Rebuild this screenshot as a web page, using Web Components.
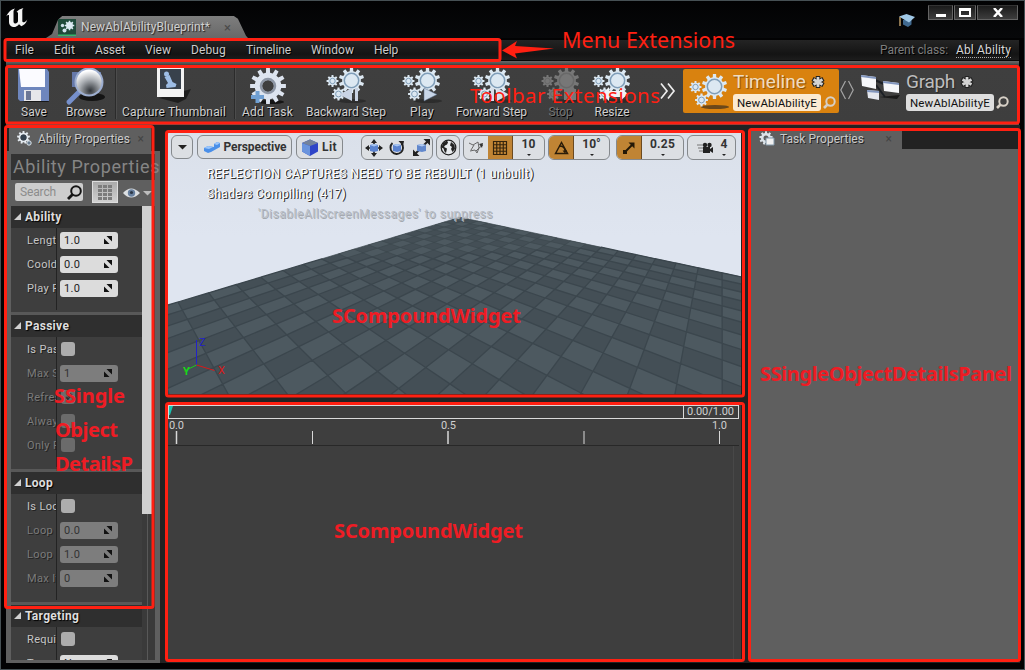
<!DOCTYPE html>
<html lang="en">
<head>
<meta charset="utf-8">
<title>NewAblAbilityBlueprint</title>
<style>
html,body{margin:0;width:1025px;height:670px;overflow:hidden;background:#000;font-family:Roboto,"Liberation Sans",sans-serif}
</style>
</head>
<body>
<ability-editor></ability-editor>
<script>
const define=(name,html,ready)=>customElements.define(name,class extends HTMLElement{
  connectedCallback(){
    if(this.shadowRoot)return;
    this.attachShadow({mode:'open'}).innerHTML=typeof html==='function'?html(this):html;
    if(ready)ready(this,this.shadowRoot);
  }
});
const at=(e,n,d='')=>e.hasAttribute(n)?e.getAttribute(n):d;

/* Text whose tracking adjusts so that it fills the given width. */
define('fit-text',`<style>:host{display:inline-block;white-space:pre;flex:none}span{display:inline-block}</style><span><slot></slot></span>`,(e,r)=>{
  const w=+at(e,'w');if(!w)return;
  const s=r.querySelector('span'),n=e.textContent.length;
  e.style.width=w+'px';
  s.style.letterSpacing=((w-s.getBoundingClientRect().width)/n)+'px';
});

function gear(cx,cy,r,n,hole){
  let d='';const st=Math.PI*2/n;
  for(let i=0;i<n;i++){const a=i*st-Math.PI/2;
    [[-.3,.74],[-.2,1],[.2,1],[.3,.74]].forEach(([o,k],j)=>{
      d+=(i||j?'L':'M')+(cx+Math.cos(a+o*st)*r*k).toFixed(2)+' '+(cy+Math.sin(a+o*st)*r*k).toFixed(2);});}
  d+='Z';
  if(hole)d+=`M${cx-hole} ${cy}a${hole} ${hole} 0 1 0 ${hole*2} 0a${hole} ${hole} 0 1 0 ${-hole*2} 0Z`;
  return d;
}
const gears=(extra='',fill='#dce8f2',ring='#7f9db8')=>`
 <ellipse cx="25" cy="33" rx="14" ry="2" fill="#222" opacity=".6"/>
 <path d="${gear(24.5,12.5,12.7,10)}" fill="${fill}"/><circle cx="24.5" cy="12.5" r="7.200" fill="${fill}" stroke="${ring}" stroke-width="1.5"/>
 <path d="${gear(5.5,13,6,8)}" fill="${fill}"/><circle cx="5.5" cy="13" r="2.7" fill="${fill}" stroke="${ring}"/>
 <path d="${gear(11.5,26,6.5,8)}" fill="${fill}"/><circle cx="11.5" cy="26" r="2.9" fill="${fill}" stroke="${ring}"/>${extra}`;
const svg=(w,h,body)=>`<svg width="${w}" height="${h}" viewBox="0 0 ${w} ${h}">${body}</svg>`;
const ICONS={
 logo:svg(24,20,`<path d="M0 9C2 4 5 1.500 9 .5c-1 1-1.500 2-1.500 3v10c0 1.500 1 2 2 2s2.500-1 2.500-2.500V5.500c0-1-.5-1.500-1.500-1.500C12 2 14.500.8 17.500 0c-1 1-1.200 2-1.200 3.200V13c0 1 1 1.700 2 1.200s2-1.200 3-3c-1 4-3.500 6-6 7l-2.300-2c-1.500 2-3.500 3-6 2.800C4 18.500 3 16 3 14V7.500C3 6.500 1 7 0 9Z" fill="#f4f4f4"/>`),
 tab:svg(18,17,`<rect width="18" height="17" fill="#1f4a3a"/><rect y="15.500" width="18" height="1.500" fill="#38b46c"/><path d="${gear(11.500,6.500,4.800,8)}" fill="#dceaf2"/><circle cx="4.500" cy="6.500" r="1.700" fill="#cfe0ea"/><circle cx="6.500" cy="11.500" r="2" fill="#cfe0ea"/>`),
 save:svg(34,36,`<path d="M5 34h27l-3-5z" fill="#181818"/><path d="M1 1h29l2 3v29H3l-2-2z" fill="#6e86bd"/><path d="M2 1h26v18H4z" fill="#fbfbff"/><path d="M7 22h17v11H7z" fill="#e6e6ea"/><path d="M9 23h5v9H9z" fill="#6d7896"/>`),
 browse:svg(42,36,`<defs><radialGradient id="g" cx=".55" cy=".85" r=".8"><stop offset="0" stop-color="#2f3338"/><stop offset=".55" stop-color="#a9adb2"/><stop offset="1" stop-color="#fff"/></radialGradient></defs><ellipse cx="27" cy="29" rx="13" ry="4" fill="#141414"/><path d="M7 4h29v15H7z" fill="#6679aa"/><path d="M4 34l12-12" stroke="#7690cc" stroke-width="5" stroke-linecap="round"/><circle cx="24" cy="14" r="14.500" fill="#9cadcf"/><circle cx="24" cy="14" r="12.500" fill="url(#g)"/>`),
 capture:svg(38,36,`<path d="M4 30l32-9-5 10-8 4z" fill="#111" opacity=".7"/><path d="M2 0h27v29H2z" fill="#f3f3f3"/><path d="M5 1h21v20H5z" fill="#38414c"/><circle cx="11.500" cy="6" r="2.500" fill="#9dbde6"/><path d="M9.500 9l5-2 3 7 4 2-1 3-9 1-.5-3 2-2z" fill="#9dbde6"/>`),
 add:svg(38,38,`<ellipse cx="22" cy="34" rx="13" ry="2" fill="#151515"/><path d="${gear(19,18,18,12,6)}" fill="#dde4ef" fill-rule="evenodd"/><circle cx="19" cy="18" r="7" fill="none" stroke="#8d96a5" stroke-width="2.500"/><path d="M6.500 23h4v4h4.500v4h-4.500v4h-4v-4H2v-4h4.500z" fill="#6f9fd2"/>`),
 back:svg(38,36,gears('<path d="M22 20v13l-13-6.500zM25 20h3v13h-3z" transform="translate(3)" fill="#c9d3e4"/>')),
 play:svg(38,36,gears('<path d="M21 20l13 6.500-13 6.500z" fill="#c9d6e8" stroke="#566b85" stroke-width=".5"/>')),
 fwd:svg(38,36,gears('<path d="M18 20h3v13h-3zM24 20l12 6.500-12 6.500z" fill="#d8dfea"/>')),
 stop:svg(38,36,gears('<path d="M22 21h12v11H22z" fill="#777"/>','#777','#696969')),
 resize:svg(38,36,gears('<path d="M9 26l7-7v4h11v-4l8 7-8 7v-4H16v4z" fill="#f0f3f6"/>')),
 mode:svg(38,36,gears()),
 graph:svg(40,28,`<path d="M14 6l11 5M15 11l9 12" stroke="#1c2026" stroke-width="2"/><path d="M18 23l21-2-3 4z" fill="#1a1a1a"/><path d="M0 1l15 2v12L1 12z" fill="#f6f7fa"/><path d="M0 1l15 2v2L0 3z" fill="#8296be"/><path d="M22 7l16 2v10l-15-2z" fill="#f6f7fa"/><path d="M22 7l16 2v2l-16-2z" fill="#8296be"/><path d="M6 16l12 1v9L7 24z" fill="#e4e7ee"/><path d="M6 16l12 1v2L6 18z" fill="#8296be"/>`),
 more:svg(16,18,`<path d="M1 1.500l6 7.500-6 7.500M8 1.500l6 7.500-6 7.500" fill="none" stroke="#ececec" stroke-width="1.700"/>`),
 swap:svg(14,20,`<path d="M5.500 1L.8 10l4.700 9M8.500 1l4.700 9-4.700 9" fill="none" stroke="#a5a5a5" stroke-width="1.200"/>`),
 star:svg(14,14,`<path d="M7 1v12M1.500 4l11 6M12.500 4l-11 6" stroke="#222" stroke-width="4.500"/><path d="M7 2v10M2.500 4.500l9 5M11.500 4.500l-9 5" stroke="#d4d4d4" stroke-width="2.700"/>`),
 find:svg(13,13,`<circle cx="7.500" cy="5.500" r="4.200" fill="none" stroke="#d7d0c6" stroke-width="2"/><path d="M4.500 8.500L1 12" stroke="#d7d0c6" stroke-width="2.600"/>`),
 search:svg(15,15,`<circle cx="9" cy="6" r="4.800" fill="none" stroke="#151515" stroke-width="2"/><path d="M5.500 9.500L1 14" stroke="#151515" stroke-width="2.800"/>`),
 hat:svg(16,16,`<path d="M4 7h8.500v4.500L9 14l-5-2.500z" fill="#40698f"/><path d="M0 3.500L7.500 1 16 4l-6 5.500z" fill="#9fc7e6"/><path d="M1 4v9" stroke="#b89a67" stroke-width="1.500"/>`),
 cogs:svg(16,15,`<path d="${gear(6.500,6.500,6.500,9,3)}" fill-rule="evenodd" fill="#e4eaf0"/><circle cx="6.500" cy="6.500" r="3" fill="#33404e"/><circle cx="12" cy="12" r="2.200" fill="#65798c" stroke="#e0e8ee"/>`),
 task:svg(16,16,`<path d="${gear(7,7,6.800,9,2.500)}" fill-rule="evenodd" fill="#dce3e9"/><path d="M7 7h8v7H7z" fill="#f1f1f1" stroke="#8197a8"/>`),
 grid:svg(14,15,`<g fill="#7c7c7c"><path d="M0 0h4v3H0zM5 0h4v3H5zM10 0h4v3h-4zM0 4h4v3H0zM5 4h4v3H5zM10 4h4v3h-4zM0 8h4v3H0zM5 8h4v3H5zM10 8h4v3h-4zM0 12h4v3H0zM5 12h4v3H5zM10 12h4v3h-4z"/></g>`),
 eye:svg(29,12,`<path d="M0 6Q8-3 17 6Q8 15 0 6z" fill="#dcdfe2"/><circle cx="8.500" cy="6" r="3.700" fill="#68809f"/><circle cx="8.500" cy="5.500" r="1.600" fill="#2d3848"/><path d="M20 4h9l-4.500 4.500z" fill="#bdbdbd"/>`),
 spin:svg(8,8,`<path d="M2.500 0H8v5.500zM0 2.500V8h5.500z" fill="#111"/>`),
 down:svg(9,5,`<path d="M0 0h9L4.500 4.500z" fill="#222"/>`),
 persp:svg(17,13,`<path d="M1 7l4-2 6 1V3l3-2 3 1v4L8 11l-3 1-4-2z" fill="#4a8fe8"/><path d="M1 7l4-2 5 1-4 2zM11 3l3-2 3 1-3 2z" fill="#9cc6fb"/>`),
 lit:svg(16,17,`<path d="M0 4l8-3.500L16 4v8.500L8 17l-8-4.500z" fill="#2f45c8"/><path d="M0 4l8-3.500L16 4 8 7z" fill="#73839c"/><path d="M0 4l8 3v10l-8-4.500z" fill="#6a94dd"/>`),
 move:svg(18,18,`<path d="M9 2v14M2 9h14" stroke="#222" stroke-width="1.600"/><path d="M9 0l3 4H6zM9 18l3-4H6zM0 9l4-3v6zM18 9l-4-3v6z" fill="#222"/><path d="M5 6l4-1 4 1v6l-4 1-4-1z" fill="#5b83cf"/><path d="M5 6l4-1 4 1-4 1.500z" fill="#a9c6f1"/>`),
 rotate:svg(16,16,`<path d="M3.500 3A6.300 6.300 0 1 0 12.500 3.500" fill="none" stroke="#222" stroke-width="1.900"/><path d="M9.500 1l5.500 0-1 5z" fill="#222"/><path d="M4 5l4-1 4 1v6l-4 1-4-1z" fill="#5b83cf"/><path d="M4 5l4-1 4 1-4 1.500z" fill="#a9c6f1"/>`),
 scale:svg(17,17,`<path d="M1 16L16 1" stroke="#222" stroke-width="2"/><path d="M10.500 0H17v6.500zM0 10.500V17h6.500z" fill="#222"/><path d="M4 6l5-1 4 1v6l-4 1-5-1z" fill="#6288cc"/><path d="M4 6l5-1 4 1-4 1.500z" fill="#b2cbf0"/>`),
 globe:svg(17,17,`<circle cx="8.500" cy="8.500" r="7.300" fill="#e7eaed" stroke="#222" stroke-width="1.300"/><path d="M3 4l4-2.500 1 2-1 2-2 1-1 1.500 3 1.500-1 4.500-1.500-1.500-1-3-2-1zM11 3l3.500 3 .5 4-2.500 3-1.500-3 1-2-2-1.500z" fill="#222"/>`),
 surf:svg(16,15,`<path d="M1 3l4 2 5-3 1 6 4-3M3 10l3-5M8 11l3-3M2 11l5-1 2 3 2-5" stroke="#666" fill="none"/><path d="M11 4l4-1-1 5z" fill="#333"/>`),
 snap:svg(14,14,`<path d="M.5.5h13v13H.5zM3.750 0v14M7 0v14M10.250 0v14M0 3.750h14M0 7h14M0 10.250h14" stroke="#33230c" fill="none" stroke-width="1.150"/>`),
 angle:svg(15,14,`<path d="M1.500 12.500L7.500 1.500l6 11z" fill="none" stroke="#2a1c08" stroke-width="1.500"/><path d="M5 5q6 0 6 5" fill="none" stroke="#2a1c08" stroke-width="1.300"/><path d="M8.500 9.500h4.500l-2 3z" fill="#2a1c08"/>`),
 ssnap:svg(12,12,`<path d="M2 10l7-7" stroke="#241806" stroke-width="2"/><path d="M5.500 .5h6v6zM0 8h4v4H0z" fill="#241806"/>`),
 cam:svg(16,12,`<path d="M6 5h7v6H6zM13 7l3-2v6l-3-2z" fill="#222"/><circle cx="8" cy="3" r="2.200" fill="#222"/><circle cx="12.500" cy="3" r="2.200" fill="#222"/><path d="M0 3h6M1 6h5M2 9h4" stroke="#777"/>`)
};
define('ui-icon',e=>`<style>:host{display:block;flex:none}svg{display:block;overflow:visible}</style>${ICONS[at(e,'name')]||''}`);

define('title-bar',`<style>
:host{display:flex;height:38px;align-items:flex-start;background:linear-gradient(#020203,#07080a)}
.logo{margin:8px 0 0 6px;width:24px}
.tab{margin:16px 0 0 16px;width:202px;height:22px;background:linear-gradient(#7e7e7e,#686868);clip-path:polygon(0 100%,3% 82%,6% 16%,8% 0,93% 0,95% 12%,99% 90%,100% 100%);display:flex;align-items:center;color:#d0d0d0;font-size:12px;text-shadow:1px 1px 1px #222}
.tab ui-icon{margin:0 5px 0 12px}.x{margin-left:14px;color:#4a4a4a;font-size:13px;text-shadow:none}
.hat{margin:13px 13px 0 auto}
.win{display:flex;margin:5px 7px 0 0;height:15px;gap:1px}
.win span{display:flex;align-items:center;justify-content:center;box-sizing:border-box;border:1px solid #646464;border-top-color:#333;width:25px;background:linear-gradient(#1b1b1b,#3d3d3d)}
.win span:nth-child(2){width:22px}.win span:last-child{width:41px}
</style>
<ui-icon class="logo" name="logo"></ui-icon>
<div class="tab"><ui-icon name="tab"></ui-icon><fit-text w="129">NewAblAbilityBlueprint*</fit-text><span class="x">×</span></div>
<ui-icon class="hat" name="hat"></ui-icon>
<div class="win"><span><svg width="10" height="8"><path d="M0 5h10v3H0z" fill="#fff"/></svg></span><span><svg width="12" height="9"><path d="M1 1.500h10v6.500H1z" fill="none" stroke="#fff" stroke-width="2"/><path d="M0 0h12v3H0z" fill="#fff"/></svg></span><span><svg width="10" height="9"><path d="M1 0l8 9M9 0L1 9" stroke="#fff" stroke-width="2.500"/></svg></span></div>`);

define('menu-bar',`<style>
:host{display:flex;height:20px;margin-top:2px;align-items:center;gap:20px;padding:0 8px 0 9px;background:linear-gradient(#242424,#141414 70%,#1d1d1d);border-bottom:1px solid #080808;font-size:12px;color:#cbcbcb;text-shadow:1px 1px #000}
.p{margin-left:auto;color:#7d7d7d;margin-right:-12px}.a{border-bottom:1px dotted #aaa;line-height:14px;color:#d6d6d6;margin-top:1px}
</style>
<fit-text w="19">File</fit-text><fit-text w="21">Edit</fit-text><fit-text w="30">Asset</fit-text><fit-text w="26">View</fit-text><fit-text w="35">Debug</fit-text><fit-text w="45">Timeline</fit-text><fit-text w="43">Window</fit-text><fit-text w="24">Help</fit-text>
<fit-text class="p" w="68">Parent class:</fit-text><fit-text class="a" w="55">Abl Ability</fit-text>`);

define('tool-button',e=>`<style>
:host{display:flex;flex-direction:column;align-items:center;flex:none;width:${at(e,'box')}px;font-size:12px;color:${at(e,'off')?'#757575':'#d0d0d0'};text-shadow:1px 1px #000}
.i{height:37px;display:flex;align-items:flex-start}fit-text{line-height:14px}
</style><div class="i"><ui-icon name="${at(e,'icon')}"></ui-icon></div><fit-text w="${at(e,'w')}">${at(e,'label')}</fit-text>`);

define('mode-tab',e=>`<style>
:host{display:flex;flex:none;box-sizing:border-box;height:44px;border-radius:2px;padding-left:7px;align-items:flex-start}
:host([active]){background:#d9820f}
ui-icon.m{margin-top:5px}
.c{margin-left:5px;color:#bdbdbd}
:host([active]) .c{color:#f0dcc0}
.t{display:flex;gap:5px;font-size:19px;line-height:24px;height:24px;padding-top:1px;align-items:center;text-shadow:1px 1px 1px #0006}
.b{display:flex;gap:2px;align-items:center}
.f{width:84px;height:17px;border-radius:3px;background:#dedede;color:#111;font-size:11.500px;line-height:18px;padding-left:4px}
:host([active]) .f{background:#fbead2}
</style><ui-icon class="m" name="${at(e,'icon')}"></ui-icon><div class="c"><div class="t"><fit-text w="${at(e,'w')}">${at(e,'label')}</fit-text><ui-icon name="star"></ui-icon></div><div class="b"><div class="f"><fit-text w="80">NewAblAbilityE</fit-text></div><ui-icon name="find"></ui-icon></div></div>`);

define('tool-bar',`<style>
:host{display:flex;height:56px;margin-top:0;padding:7px 0 0 2px;background:linear-gradient(#686868,#585858 2px,#3f3f3f 4px,#3e3e3e);box-sizing:content-box;border-bottom:1px solid #555}
i{width:1px;background:#2b2b2b;border-right:1px solid #4c4c4c;height:54px;margin-top:-3px}
.more{width:44px;box-sizing:border-box;padding:14px 0 0 21px}.swap{width:16px;margin-top:12px;padding-left:1px;box-sizing:border-box}
mode-tab{margin-top:1px}
</style>
<tool-button icon="save" label="Save" w="26" box="52"></tool-button><tool-button icon="browse" label="Browse" w="40" box="52"></tool-button><i style="margin-left:3px;margin-right:2px"></i>
<tool-button icon="capture" label="Capture Thumbnail" w="104" box="110"></tool-button><i style="margin-left:5px;margin-right:4px"></i>
<tool-button icon="add" label="Add Task" w="51" box="55"></tool-button><tool-button icon="back" label="Backward Step" w="80" box="102"></tool-button><tool-button icon="play" label="Play" w="24" box="50"></tool-button><tool-button icon="fwd" label="Forward Step" w="71" box="89"></tool-button><tool-button icon="stop" label="Stop" w="24" box="49"></tool-button><tool-button icon="resize" label="Resize" w="35" box="54"></tool-button>
<ui-icon class="more" name="more"></ui-icon>
<mode-tab active icon="mode" label="Timeline" w="73" style="width:156px"></mode-tab><ui-icon class="swap" name="swap"></ui-icon><mode-tab icon="graph" label="Graph" w="49" style="width:163px;padding-left:6px"></mode-tab>`,
(e,r)=>{r.querySelector('[label=Stop]').style.color='#757575'});

define('dock-tab',e=>`<style>
:host{display:flex;flex:none;align-items:center;height:23px;background:#5f5f5f;color:#cacaca;font-size:12px;text-shadow:1px 1px #222;border-radius:3px 3px 0 0}
.x{color:#444;font-size:12px;margin-left:auto;margin-right:${at(e,'gap','8')}px;text-shadow:none}
fit-text{margin-left:5px}
</style><ui-icon style="margin-left:8px" name="${at(e,'icon')}"></ui-icon><fit-text w="${at(e,'w')}">${at(e,'label')}</fit-text><span class="x">×</span>`);

define('prop-row',e=>{
 const k=at(e,'kind','num');
 return `<style>
:host{display:flex;height:24px;align-items:center;color:#c6c6c6;font-size:11px;text-shadow:1px 1px #222}
:host([off]){color:#7b7b7b}
.l{width:29px;margin-left:16px;overflow:hidden;white-space:nowrap;letter-spacing:.35px;line-height:16px;padding-top:1px}
.v{margin-left:4px;width:58px;height:17px;box-sizing:border-box;border-radius:3px;background:#dcdcdc;color:#222;display:flex;align-items:center;justify-content:space-between;padding:0 6px 0 4px;text-shadow:none;letter-spacing:.3px}
:host([off]) .v{background:#7d7d7d;color:#333}
.c{margin-left:5px;width:14px;height:14px;border-radius:3px;background:#adadad;color:#333;line-height:14px;text-align:center}
:host([off]) .c{background:#6b6b6b}
</style><div class="l">${at(e,'label')}</div>${k==='num'?`<div class="v"><span>${at(e,'value')}</span><ui-icon name="spin"></ui-icon></div>`:`<div class="c">${at(e,'value')}</div>`}`});

define('prop-group',e=>`<style>
:host{display:block;background:#3e3e3e;border-bottom:3px solid #585858;flex:none}
.h{height:22px;background:#2f2f2f;display:flex;align-items:center;gap:4px;color:#dedede;font-weight:700;font-size:12px;text-shadow:1px 1px 1px #000;letter-spacing:.3px}
.h svg{margin:0 0 2px 3px}
.r{padding-bottom:12px;background:linear-gradient(90deg,transparent 45px,#232323 45px,#232323 46px,transparent 46px) 0 0/100% calc(100% - 2px) no-repeat}
</style><div class="h"><svg width="7" height="7"><path d="M7 0v7H0z" fill="#d0d0d0"/></svg><span>${at(e,'label')}</span></div><div class="r"><slot></slot></div>`);

define('ability-panel',`<style>
:host{display:flex;flex-direction:column;width:154px;height:537px;overflow:hidden}
dock-tab{width:142px;margin-left:3px;height:25px}
.body{background:#5f5f5f;flex:1;min-height:0;padding:3px 5px 3px;display:flex;flex-direction:column}
.t{height:26px;background:#333;color:#858585;font-size:18px;line-height:26px;padding-left:2px;white-space:nowrap}
.s{height:26px;display:flex;align-items:center;padding-left:4px}
.in{width:68px;height:18px;box-sizing:border-box;background:#cdcdcd;border-radius:2px;display:flex;align-items:center;justify-content:space-between;padding:0 1px 0 5px;color:#8c8c8c;font-size:12px;margin-top:-2px}
.g{width:26px;height:22px;box-sizing:border-box;margin:-2px 5px 0 9px;border:1px solid #ddd;background:linear-gradient(#aaa,#d0d0d0);display:flex;align-items:center;justify-content:center}
.s>ui-icon{margin-top:-1px}
.list{flex:1;min-height:0;display:grid;grid-template-columns:131px 13px;overflow:hidden}
.c{overflow:hidden;display:flex;flex-direction:column}
.sb{background:linear-gradient(90deg,transparent 5px,#585858 5px,#585858 6px,transparent 6px) #3a3a3a}
.sb div{height:308px;width:10px;background:#d0d0d0}
</style><dock-tab icon="cogs" label="Ability Properties" w="92" gap="7"></dock-tab>
<div class="body"><div class="t"><fit-text w="147">Ability Properties</fit-text></div>
<div class="s"><div class="in"><fit-text w="36">Search</fit-text><ui-icon name="search"></ui-icon></div><div class="g"><ui-icon name="grid"></ui-icon></div><ui-icon name="eye"></ui-icon></div>
<div class="list"><div class="c">
<prop-group label="Ability"><prop-row label="Length" value="1.0"></prop-row><prop-row label="Cooldown" value="0.0"></prop-row><prop-row label="Play Rate" value="1.0"></prop-row></prop-group>
<prop-group label="Passive"><prop-row label="Is Passive" kind="check"></prop-row><prop-row off label="Max Stacks" value="1"></prop-row><prop-row off label="Refresh" kind="check" value="✓"></prop-row><prop-row off label="Always" kind="check"></prop-row><prop-row off label="Only R" kind="check"></prop-row></prop-group>
<prop-group label="Loop"><prop-row label="Is Looping" kind="check"></prop-row><prop-row off label="Loop Start" value="0.0"></prop-row><prop-row off label="Loop End" value="1.0"></prop-row><prop-row off label="Max Iterations" value="0"></prop-row></prop-group>
<prop-group label="Targeting"><prop-row label="Require" kind="check"></prop-row><prop-row label="Target" value="None"></prop-row></prop-group>
</div><div class="sb"><div></div></div></div></div>`);

define('vp-group',`<style>
:host{display:flex;flex:none;box-sizing:border-box;height:25px;border:1px solid #85898d;border-radius:6px;background:#dcdfe3;overflow:hidden;font-weight:700;font-size:12px;color:#333;align-items:center;justify-content:center}
</style><slot></slot>`);
define('vp-value',e=>`<style>:host{display:flex;flex:1;flex-direction:column;align-items:center;line-height:13px}svg{margin-top:3px}</style><slot></slot><svg width="4" height="3"><path d="M0 0h4L2 2z" fill="#222"/></svg>`);

/* Checkered ground plane seen in perspective: u runs down-left and v down-right from the far corner. */
function floor(){
 const A=.0288,B=.0230,P=(u,v)=>{const a=A*u,b=B*v,w=1-a-b;return w<.12?null:[(460-722*a-89*b)/w-168,(217.3-138.6*(a+b))/w-132]};
 let tiles='',lines='',far='';
 const f=p=>p[0].toFixed(1)+' '+p[1].toFixed(1);
 for(let u=0;u<31;u++)for(let v=0;v<39;v++){
  const q=[P(u,v),P(u+1,v),P(u+1,v+1),P(u,v+1)];
  if(q.some(p=>!p))continue;
  if((u+v)%2===0)tiles+='M'+q.map(f).join('L')+'Z';
  const l='M'+f(q[1])+'L'+f(q[0])+'L'+f(q[3]);
  if(u+v<12)far+=l;else lines+=l;
 }
 return `<path d="M292 85.300L0 173v92h575V145z" fill="#444f56"/><path d="${tiles}" fill="#4d5960"/><path d="${far}" fill="none" stroke="#3c474e" stroke-width=".7"/><path d="${lines}" fill="none" stroke="#3b464d" stroke-width="1.300"/>`;
}
define('level-viewport',`<style>
:host{display:block;position:relative;height:262px;margin:0 3px 0 2px;overflow:hidden;background:linear-gradient(#dae0ea,#dfe5f0 40%)}
.scene{position:absolute;left:0;top:0}
.bar{position:relative;display:flex;padding:3px 0 0 3px;align-items:flex-start}
.o{align-self:stretch;display:flex;align-items:center;justify-content:center;background:#c08434;border:0 solid #6b4a20;border-right-width:1px;width:24px}
.msg{position:relative;font-size:12px;color:#fff;text-shadow:1px 1px #333,1px 0 #555;padding:7px 0 0 39px}
.msg fit-text{display:block;line-height:15px;margin-bottom:5px}
.msg .d{color:#b9bec6;text-shadow:1px 1px #a4a9b0;margin-left:51px}
</style>
<svg class="scene" width="573" height="262" viewBox="0 0 573 262">${floor()}
<path d="M28.500 233v-25" stroke="#2222c8" fill="none"/><path d="M28.500 233l18 5.500" stroke="#d81818"/><path d="M28.500 233l-12 6" stroke="#19c819"/>
<g font-family="Roboto" font-size="11"><text x="31" y="214" fill="#2222c8">Z</text><text x="50" y="242" fill="#d81818">X</text><text x="15" y="243" fill="#19d819" font-weight="700">Y</text></g></svg>
<div class="bar">
<vp-group style="width:22px;height:24px"><ui-icon name="down"></ui-icon></vp-group>
<vp-group style="width:95px;height:24px;margin-left:4px;gap:4px"><ui-icon name="persp"></ui-icon><fit-text w="63">Perspective</fit-text></vp-group>
<vp-group style="width:47px;height:24px;margin-left:4px;gap:4px"><ui-icon name="lit"></ui-icon><fit-text w="15">Lit</fit-text></vp-group>
<vp-group style="width:72px;margin-left:18px;gap:8px"><ui-icon name="move"></ui-icon><ui-icon name="rotate" style="margin-left:-2px"></ui-icon><ui-icon name="scale"></ui-icon></vp-group>
<vp-group style="width:24px;margin-left:3px"><ui-icon name="globe"></ui-icon></vp-group>
<vp-group style="width:82px;margin-left:3px"><ui-icon name="surf" style="margin:0 4px"></ui-icon><div class="o"><ui-icon name="snap"></ui-icon></div><vp-value>10</vp-value></vp-group>
<vp-group style="width:62px;margin-left:3px"><div class="o"><ui-icon name="angle"></ui-icon></div><vp-value>10°</vp-value></vp-group>
<vp-group style="width:68px;margin-left:6px"><div class="o"><ui-icon name="ssnap"></ui-icon></div><vp-value><fit-text w="25">0.25</fit-text></vp-value></vp-group>
<vp-group style="width:49px;margin-left:3px"><ui-icon name="cam" style="margin-left:9px"></ui-icon><vp-value>4</vp-value></vp-group>
</div>
<div class="msg"><fit-text w="327">REFLECTION CAPTURES NEED TO BE REBUILT (1 unbuilt)</fit-text><fit-text w="139">Shaders Compiling (417)</fit-text><fit-text class="d" w="235">'DisableAllScreenMessages' to suppress</fit-text></div>`);

define('time-line',`<style>
:host{display:flex;flex-direction:column;height:256px;margin:0 3px 0 2px;background:#3e3e3e}
.h{display:flex;height:14px;box-sizing:border-box;border:1px solid #dadada;margin-right:2px;justify-content:space-between;font-size:11px;line-height:12px;color:#d2d2d2}
.h b{font-weight:400;border-left:1px solid #dadada;width:55px;box-sizing:border-box;padding-left:3px}
.ruler{height:26px;border-bottom:1px solid #282828;margin-right:2px}
.ruler svg{display:block}
.body{flex:1;margin-right:7px;border-right:1px solid #484848}
</style>
<div class="h"><svg width="5" height="12"><path d="M0 0h4L1 9H0z" fill="#18c2b0"/></svg><b><fit-text w="47">0.00/1.00</fit-text></b></div>
<div class="ruler"><svg width="571" height="26"><g stroke="#d8d8d8" stroke-width="1.500"><path d="M8.500 12v13M280 12v13"/><path d="M144.500 12v13M416 12v13M551.500 12v13" stroke-width="1"/></g><g fill="#d0d0d0" font-family="Roboto" font-size="11"><text x="1" y="10" textLength="15">0.0</text><text x="273" y="10" textLength="15">0.5</text><text x="544" y="10" textLength="15">1.0</text></g></svg></div>
<div class="body"></div>`);

define('task-panel',`<style>
:host{display:flex;flex-direction:column;height:530px;margin:3px 0 0;width:269px}
.b{flex:1;background:#5f5f5f}dock-tab{width:151px;height:20px;margin-left:1px;border-radius:0}
</style><dock-tab icon="task" label="Task Properties" w="84" gap="10"></dock-tab><div class="b"></div>`);

/* Red call-outs drawn over the editor. */
define('note-layer',`<style>:host{position:absolute;left:0;top:0;pointer-events:none}svg{display:block}</style>
<svg width="1025" height="670"><g fill="none" stroke="#ff2012" stroke-width="3">
<rect x="5" y="39.500" width="495" height="21" rx="2"/><rect x="6.500" y="66.500" width="1012" height="56.500" rx="2"/><rect x="5.500" y="126.500" width="147.500" height="481" rx="2"/>
<rect x="166.500" y="131.500" width="577" height="264.500" rx="2"/><rect x="166.500" y="403.500" width="577" height="257" rx="2"/><rect x="749.500" y="129.500" width="270" height="531" rx="2"/></g>
<path d="M502 50.500L517 41l-2 5 39 2.500-39 5 2 5z" fill="#ff2012"/>
<g fill="#ff2012" font-family="'Noto Sans','Open Sans',sans-serif"><text x="562" y="48" font-size="21.500" textLength="173">Menu Extensions</text><text x="470" y="103" font-size="20.500" textLength="190">Toolbar Extensions</text></g>
<clipPath id="c"><rect x="50" y="380" width="100" height="91"/></clipPath>
<g fill="#ee1c24" font-family="'Noto Sans','Open Sans',sans-serif" font-size="20" font-weight="700"><text x="332" y="323" textLength="189">SCompoundWidget</text><text x="334" y="538" textLength="189">SCompoundWidget</text><text x="760" y="381" textLength="252">SSingleObjectDetailsPanel</text>
<g clip-path="url(#c)"><text x="54" y="403" textLength="71">SSingle</text><text x="55" y="437" textLength="63">Object</text><text x="55" y="471" textLength="78">DetailsP</text></g></g></svg>`);

define('ability-editor',`<style>
:host{display:flex;flex-direction:column;position:relative;width:1025px;height:670px;box-sizing:border-box;background:#020203;overflow:hidden}
:host::after{content:"";position:absolute;inset:0;border:1px solid #465054;pointer-events:none}
.in{padding:0 6px;display:flex;flex-direction:column}
.work{display:grid;grid-template-columns:154px 578px 269px;column-gap:6px;background:#222;height:537px;padding-top:1px;width:1014px}
.mid{display:grid;grid-template-rows:262px 256px;row-gap:11px;padding-top:6px}
.mid{align-content:start}
</style>
<title-bar></title-bar>
<div class="in"><menu-bar></menu-bar><tool-bar></tool-bar>
<div class="work"><ability-panel></ability-panel><div class="mid"><level-viewport></level-viewport><time-line></time-line></div><task-panel></task-panel></div></div>
<note-layer></note-layer>`);
</script>
</body>
</html>
